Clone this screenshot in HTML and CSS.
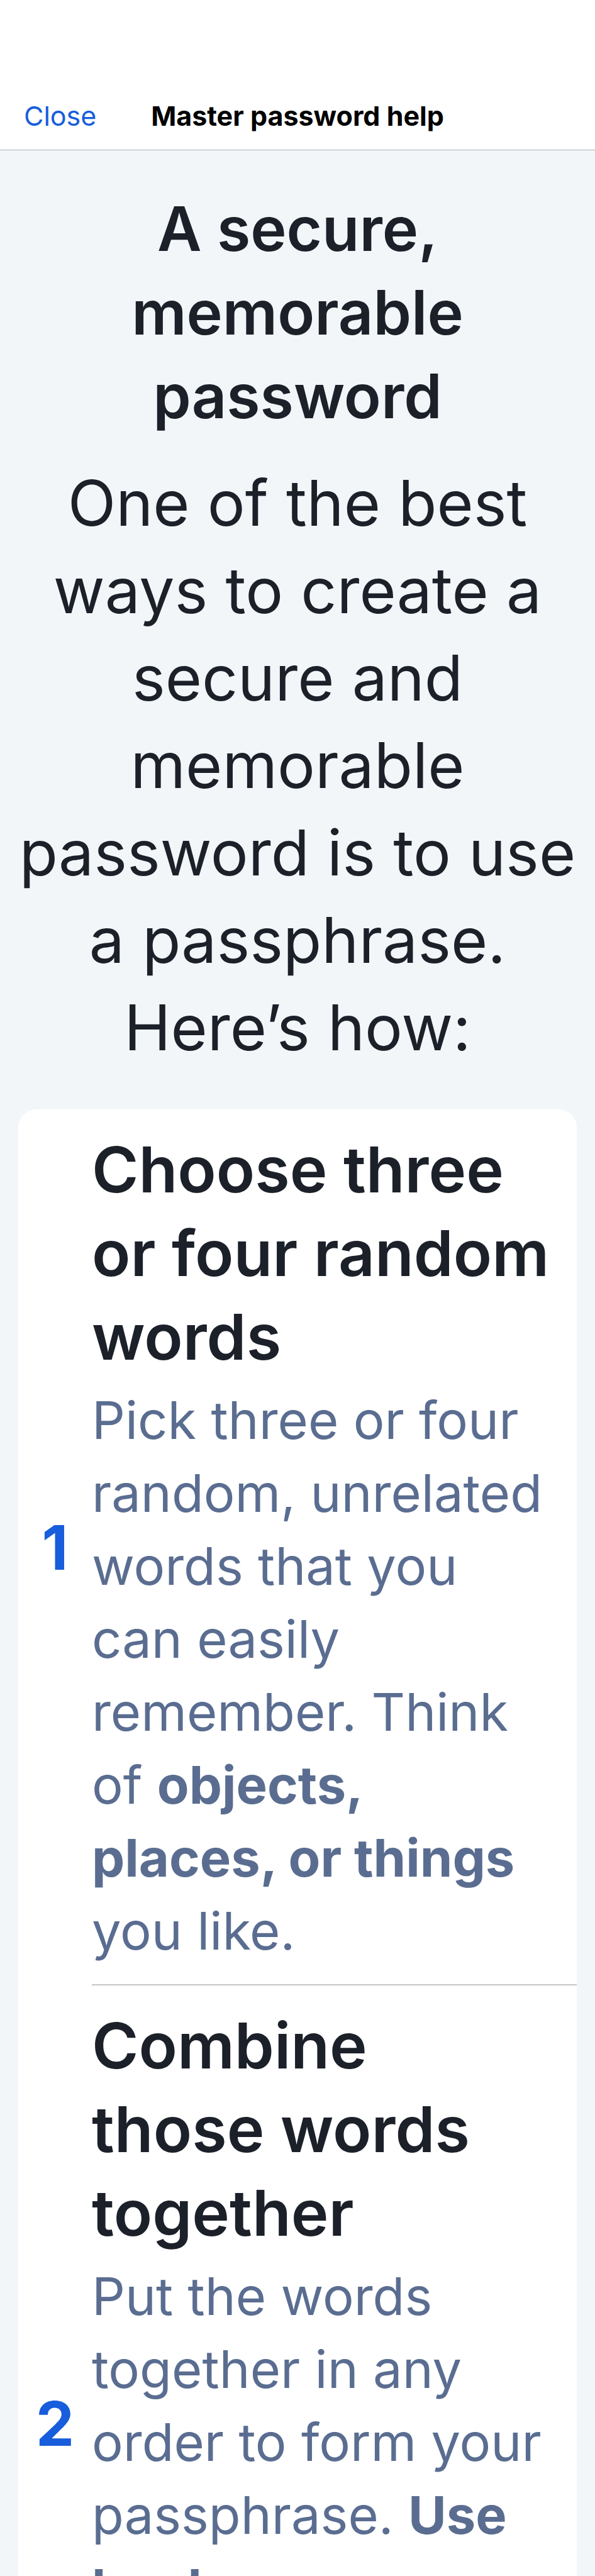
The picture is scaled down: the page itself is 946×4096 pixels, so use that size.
FILE: index.html
```
<!DOCTYPE html>
<html lang="en">
<head>
  <meta charset="utf-8">
  <meta name="viewport" content="width=device-width, initial-scale=1">
  <title>Master password help</title>
  <link rel="stylesheet" href="styles.css">
</head>
<body>
  <div class="screen">
    <header class="navbar">
      <button class="navbar-close" type="button">Close</button>
      <h1 class="navbar-title">Master password help</h1>
    </header>
    <main class="content">
      <section class="intro">
        <h2 class="intro-title">A secure, memorable password</h2>
        <p class="intro-text">One of the best ways to create a secure and memorable password is to use a passphrase. Here’s how:</p>
      </section>
      <ol class="steps">
        <li class="step">
          <span class="step-number">1</span>
          <div class="step-body">
            <h3 class="step-title">Choose three or four random words</h3>
            <p class="step-text">Pick three or four random, unrelated words that you can easily remember. Think of <strong>objects, places, or things</strong> you like.</p>
          </div>
        </li>
        <li class="step">
          <span class="step-number">2</span>
          <div class="step-body">
            <h3 class="step-title">Combine those words together</h3>
            <p class="step-text">Put the words together in any order to form your passphrase. <strong>Use hyphens,</strong></p>
          </div>
        </li>
      </ol>
    </main>
  </div>
</body>
</html>
```
FILE: styles.css
```
* {
  box-sizing: border-box;
}

body {
  margin: 0;
  font-family: Inter, "Liberation Sans", sans-serif;
  color: #1b2029;
  background: #f2f6f9;
}

h1,
h2,
h3,
p {
  margin: 0;
}

.screen {
  display: flex;
  flex-direction: column;
  height: 100vh;
}

.navbar {
  display: grid;
  grid-template-columns: 1fr auto 1fr;
  align-items: center;
  flex: none;
  padding: 158px 38px 28px;
  background: #ffffff;
  border-bottom: 1px solid #a9adb0;
}

.navbar-close {
  justify-self: start;
  padding: 0;
  border: 0;
  background: none;
  font: 400 43px/52px Inter, "Liberation Sans", sans-serif;
  color: #175ddc;
}

.navbar-title {
  font-size: 43px;
  line-height: 52px;
  font-weight: 700;
  color: #000000;
}

.content {
  flex: 1;
  min-height: 0;
  padding: 58px 29px 0;
  overflow-y: auto;
  scrollbar-width: none;
}

.intro {
  text-align: center;
}

.intro-title {
  font-size: 97px;
  line-height: 133px;
  font-weight: 600;
}

.intro-text {
  margin-top: 34px;
  font-size: 100px;
  line-height: 139px;
}

.steps {
  display: grid;
  grid-auto-rows: 1fr;
  margin: 61px 0 0;
  padding: 0;
  list-style: none;
  background: #ffffff;
  border-radius: 29px;
}

.step {
  display: grid;
  grid-template-columns: 117px 1fr;
}

.step-number {
  align-self: center;
  text-align: center;
  font-size: 97px;
  line-height: 133px;
  font-weight: 700;
  color: #175ddc;
}

.step-body {
  padding: 29px 42px 27px 0;
  border-bottom: 2px solid #c6c6c8;
}

.step-title {
  font-size: 101px;
  line-height: 133px;
  font-weight: 600;
}

.step-text {
  margin-top: 8px;
  font-size: 83px;
  line-height: 116px;
  color: #5a6d91;
}
```
